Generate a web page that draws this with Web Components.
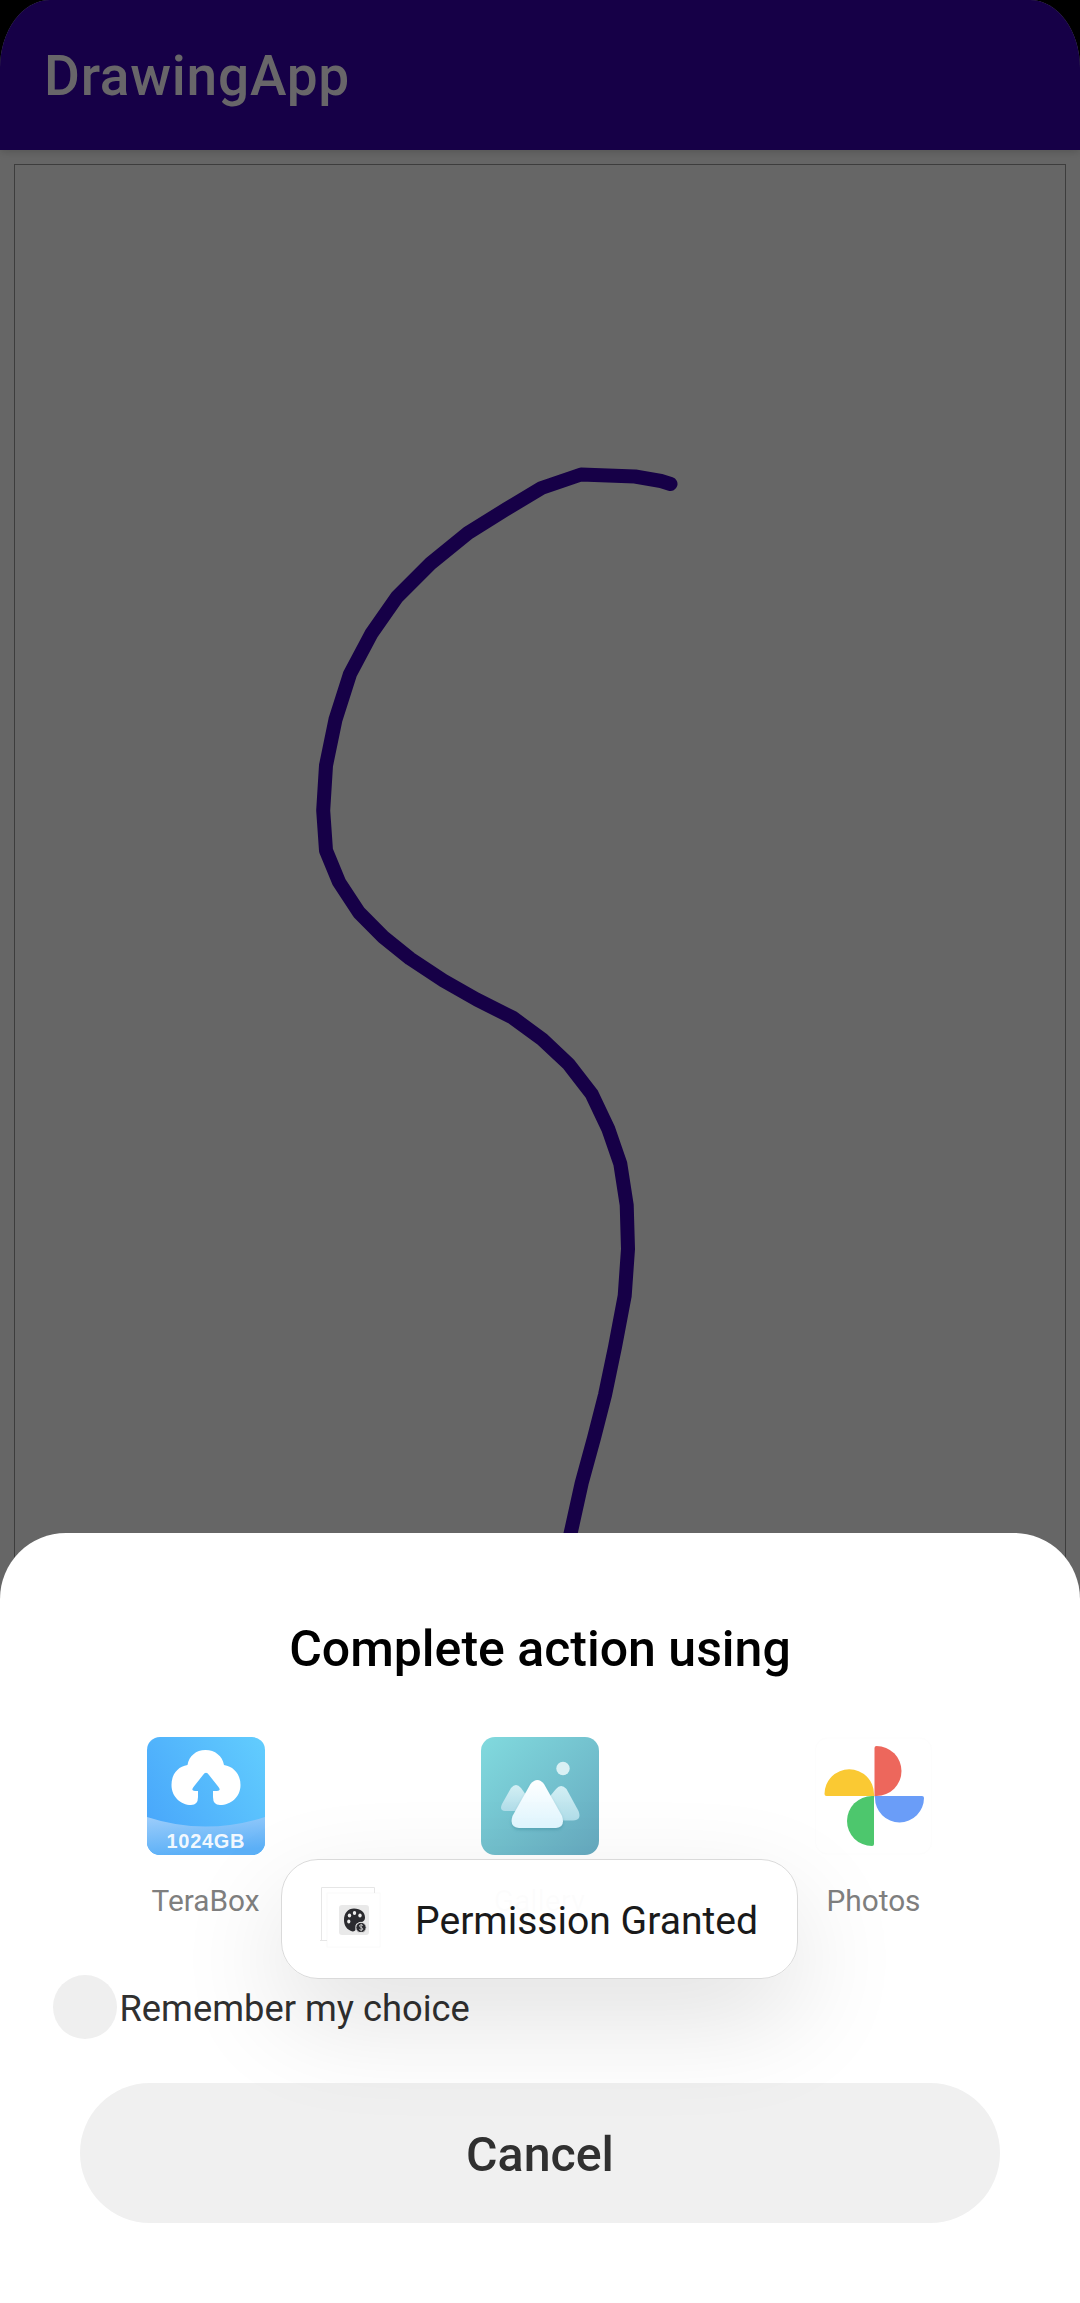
<!DOCTYPE html>
<html lang="en">
<head>
<meta charset="utf-8">
<title>DrawingApp</title>
<style>
html,body{margin:0;padding:0;background:#000}
body{font-family:Roboto,"Noto Sans",sans-serif}
</style>
</head>
<body>
<drawing-screen>
  <app-header>DrawingApp</app-header>
  <drawing-canvas></drawing-canvas>
  <action-sheet slot="overlay" heading="Complete action using">
    <app-choice label="TeraBox"><terabox-icon></terabox-icon></app-choice>
    <app-choice label="Gallery"><gallery-icon></gallery-icon></app-choice>
    <app-choice label="Photos"><photos-icon></photos-icon></app-choice>
    <remember-check slot="option">Remember my choice</remember-check>
    <cancel-button slot="footer">Cancel</cancel-button>
  </action-sheet>
  <toast-message slot="overlay">Permission Granted</toast-message>
</drawing-screen>
<script>
function define(name, html) {
  customElements.define(name, class extends HTMLElement {
    constructor() {
      super();
      this.attachShadow({ mode: 'open' });
    }
    connectedCallback() {
      const t = document.createElement('template');
      t.innerHTML = html(this);
      this.shadowRoot.replaceChildren(t.content.cloneNode(true));
    }
  });
}

define('drawing-screen', () => `
<style>
:host{display:flex;flex-direction:column;position:relative;width:1080px;height:2303px;overflow:hidden;background:#666;
  border-radius:50px 50px 0 0/68px 68px 0 0}
</style>
<slot></slot><slot name="overlay"></slot>`);

define('app-header', () => `
<style>
:host{display:flex;align-items:center;flex:none;height:150px;box-sizing:border-box;padding:2px 0 0 44px;background:#160047;
  color:#686669;font-size:55px;font-weight:500;line-height:64px;letter-spacing:.75px;box-shadow:0 1px 9px rgba(0,0,0,.2);z-index:1}
</style><span><slot></slot></span>`);

define('drawing-canvas', () => `
<style>
:host{display:block;flex:1;margin:14px;border:1px solid #3d3d3d;min-height:0;overflow:hidden}
svg{display:block}
</style>
<svg width="1050" height="1450" viewBox="15 165 1050 1450" fill="none" stroke="#160047" stroke-width="14" stroke-linecap="round" stroke-linejoin="round">
<path d="M670.5 484L661 481L635 476.5L581 474.5L541.5 488L506.500 509L468 533L430.500 563.500L397 597L371.500 633.500L350 674L335.500 719.500L326 765.500L323.200 810.500L326 850.500L339 882L359 912.500L383.300 937L410 958.500L443.300 980.500L476.700 999.500L512.500 1017.500L542.300 1039.300L568.500 1064L591.700 1094L608.300 1129L620.300 1163.700L626.700 1205L628 1249L624.700 1295.700L615 1347L605 1395L594 1438L581.700 1483L570 1536L560 1580"/>
</svg>`);

define('action-sheet', el => `
<style>
:host{display:flex;flex-direction:column;position:absolute;left:0;right:0;bottom:0;height:770px;box-sizing:border-box;
  padding:86px 0 80px;background:#fff;border-radius:66px 66px 0 0;z-index:2}
h1{margin:0;text-align:center;font-size:50px;line-height:60px;font-weight:500;color:#000}
.apps{display:grid;grid-template-columns:repeat(3,1fr);padding:58px 39.500px 56px 38.500px}
.foot{margin:44px 80px 0}
</style>
<h1>${el.getAttribute('heading')}</h1>
<div class="apps"><slot></slot></div>
<slot name="option"></slot>
<div class="foot"><slot name="footer"></slot></div>`);

define('app-choice', el => `
<style>
:host{display:flex;flex-direction:column;align-items:center;gap:28px;color:#7f7f7f;font-size:29.800px;line-height:36px}
</style>
<slot></slot><span>${el.getAttribute('label')}</span>`);

define('terabox-icon', () => `
<style>:host{display:block;width:118px;height:118px}svg{display:block}</style>
<svg width="118" height="118" viewBox="0 0 118 118">
<defs>
<linearGradient id="a" x1="0" y1=".6" x2="1" y2="0"><stop offset="0" stop-color="#4aa9fb"/><stop offset="1" stop-color="#62cdfe"/></linearGradient>
<linearGradient id="b" x1="0" y1="0" x2=".25" y2="1"><stop offset="0" stop-color="#9ccdfb"/><stop offset="1" stop-color="#5cb0f7"/></linearGradient>
<clipPath id="c"><rect width="118" height="118" rx="13"/></clipPath>
</defs>
<g clip-path="url(#c)"><rect width="118" height="118" fill="url(#a)"/>
<path d="M0 80Q58 99 118 80V118H0Z" fill="url(#b)"/></g>
<path d="M51 60V54H48Q43.500 54 46.500 50L56 38Q59 33.500 62 38L71.500 50Q74.500 54 70 54H66V60Q66 68 73 68C84 68 93.500 60 93.500 48C93.500 37 86.500 29.500 77 28C75.500 19 68 13 58.500 13C49 13 42 19 40.500 28C31 29.500 24.500 37 24.500 48C24.500 60 34 68 44 68Q51 68 51 60Z" fill="#fff"/>
<text x="58.500" y="110.500" text-anchor="middle" textLength="78" font-family="Liberation Sans,Arial,sans-serif" font-weight="700" font-size="20" fill="#fff" fill-opacity=".93">1024GB</text>
</svg>`);

define('gallery-icon', () => `
<style>:host{display:block;width:118px;height:118px}svg{display:block}</style>
<svg width="118" height="118" viewBox="0 0 118 118">
<defs>
<linearGradient id="a" x1="0" y1="0" x2="1" y2="1"><stop offset="0" stop-color="#81dade"/><stop offset="1" stop-color="#66a9bf"/></linearGradient>
<linearGradient id="b" x1="0" y1="0" x2="0" y2="1"><stop offset="0" stop-color="#fff"/><stop offset="1" stop-color="#dff6ff"/></linearGradient>
<linearGradient id="m" x1="0" y1="0" x2="0" y2="1"><stop offset="0" stop-color="#d3eff4"/><stop offset="1" stop-color="#b0dde9"/></linearGradient>
<filter id="s" x="-20%" y="-20%" width="140%" height="150%"><feDropShadow dx="0" dy="2" stdDeviation="1.500" flood-color="#398c9e" flood-opacity=".45"/></filter>
</defs>
<rect width="118" height="118" rx="14" fill="url(#a)"/>
<circle cx="82" cy="31.500" r="6.700" fill="#d9f0f4"/>
<path d="M30 51Q35 45 40 51L53 69Q56 74 50 74H24Q18 73.500 21 67Z" fill="url(#m)"/>
<path d="M75 52Q80 46 85.500 52L97.500 74Q101 83 92 83.500H64L60 70Z" fill="url(#m)"/>
<path d="M49.500 47Q56.500 39 63 47L81 79Q84.500 90 75 91H38Q28 90 31.500 79Z" fill="url(#b)" filter="url(#s)"/>
</svg>`);

define('photos-icon', () => `
<style>:host{display:block;width:118px;height:118px}svg{display:block}</style>
<svg width="118" height="118" viewBox="0.500 0 118 118">
<rect x="1" y="1" width="116" height="116" rx="12" fill="#fff" stroke="#fdfdfd"/>
<path d="M60 59V11Q60 9 62 9A25 25 0 0 1 62 59Z" fill="#ed675c"/>
<path d="M60 59H12Q10 59 10 57A24.700 24.700 0 0 1 59.500 57Z" fill="#fac933"/>
<path d="M60 59H107.500Q109.500 59 109.500 61A24.500 24.500 0 0 1 60.500 61Z" fill="#6a9df8"/>
<path d="M59.500 59V107Q59.500 109 57.500 109A25 25 0 0 1 57.500 59Z" fill="#4dc76d"/>
</svg>`);

define('remember-check', () => `
<style>
:host{display:flex;align-items:center;gap:2.500px;margin-left:53px;height:64px;font-size:36.300px;line-height:44px;color:#303030}
i{width:64px;height:64px;border-radius:50%;background:#efefef}
span{padding-top:3px}
</style><i></i><span><slot></slot></span>`);

define('cancel-button', () => `
<style>
:host{display:block}
button{display:block;width:100%;height:140px;padding:3px 0 0;border:0;border-radius:70px;background:#f0f0f0;color:#303030;font:500 48.300px/60px Roboto,sans-serif}
</style><button><slot></slot></button>`);

define('toast-message', () => `
<style>
:host{display:flex;align-items:center;position:absolute;left:281px;top:1859px;width:517px;height:120px;box-sizing:border-box;
  padding-left:37px;gap:34px;border:1px solid #dadada;border-radius:37px;background:rgba(255,255,255,.98);background-clip:padding-box;
  box-shadow:0 40px 110px rgba(0,0,0,.12);z-index:3;color:#1a1a1a;font-size:39.100px;line-height:46px}
span{padding-top:3px;white-space:nowrap}
svg{display:block;flex:none;margin-bottom:4px}
</style>
<svg width="62" height="64" viewBox="319 1884 62 64">
<rect x="327" y="1892" width="53" height="54" fill="#fff" stroke="#fafafa"/>
<path d="M321.500 1939V1886.500H374.500V1892M320 1939.500H327" fill="none" stroke="#e6e6e6"/>
<rect x="339" y="1904" width="30" height="30" rx="3" fill="#e9e9e9"/>
<path d="M354 1907.500C360.500 1907.500 365 1911 365 1916.500C365 1920.500 362 1921.500 358 1922Q355 1922.500 356 1926Q356 1930.500 352.500 1930.500C347 1929 344 1924.500 344 1919C344 1912 348 1907.500 354 1907.500Z" fill="#2b2b2f"/>
<g fill="#eee"><ellipse cx="349.500" cy="1914.500" rx="1.700" ry="2"/><ellipse cx="354.500" cy="1912" rx="1.700" ry="2"/><ellipse cx="360" cy="1914.500" rx="1.700" ry="2"/><ellipse cx="348.800" cy="1920.500" rx="1.600" ry="2"/></g>
<circle cx="361" cy="1926.500" r="5.200" fill="#2b2b2f" stroke="#e9e9e9"/>
<path d="M363 1924.500Q361 1923 359.500 1924.500Q359.500 1926 361.200 1926.500Q363 1927 362.800 1928.500Q361 1930 359.300 1928.500M361.200 1922.800V1930.300" fill="none" stroke="#ddd" stroke-width=".8"/>
</svg>
<span><slot></slot></span>`);
</script>
</body>
</html>
